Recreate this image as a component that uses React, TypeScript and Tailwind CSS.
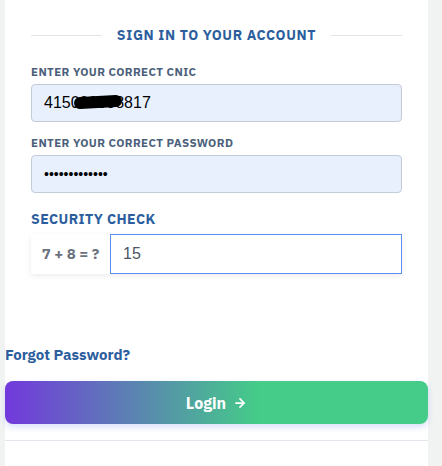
import { ArrowRight } from "lucide-react";

const font = { fontFamily: "'IBM Plex Sans', Inter, 'Liberation Sans', sans-serif" };
const inputFont = { fontFamily: "'Liberation Sans', Arial, sans-serif" };

function Field({ label, children }: { label: string; children: React.ReactNode }) {
  return (
    <div className="flex flex-col">
      <label className="text-[11.5px] font-bold tracking-[0.035em] text-[#4b5f7c] leading-[14px] mb-[5px]">
        {label}
      </label>
      {children}
    </div>
  );
}

export default function App() {
  return (
    <div className="w-[442px] h-[466px] bg-[#f1f3f3] overflow-hidden" style={font}>
      <div className="ml-[5px] w-[423px] h-full bg-white flex flex-col">
        {/* Form area */}
        <div className="px-[26px] pt-[27px]">
          {/* Divider heading */}
          <div className="flex items-center gap-[15px]">
            <div className="flex-1 h-px bg-[#e2e4e6]"></div>
            <h2 className="text-[14px] font-bold tracking-[0.045em] text-[#2c5e9e] leading-[16px]">
              SIGN IN TO YOUR ACCOUNT
            </h2>
            <div className="flex-1 h-px bg-[#e2e4e6]"></div>
          </div>

          <div className="mt-[22px] flex flex-col gap-[14px]">
            <Field label="ENTER YOUR CORRECT CNIC">
              <div className="relative h-[38px] bg-[#e8f0fe] border border-[#c3cbd6] rounded-[4px] flex items-center px-[12px] text-[16px] text-black" style={inputFont}>
                415000008817
                <span className="absolute left-[42px] top-[11px] w-[48px] h-[12px] bg-black rounded-full -rotate-3"></span>
              </div>
            </Field>

            <Field label="ENTER YOUR CORRECT PASSWORD">
              <div className="h-[38px] bg-[#e8f0fe] border border-[#c3cbd6] rounded-[4px] flex items-center px-[12px] text-[14px] text-black" style={inputFont}>
                •••••••••••••
              </div>
            </Field>
          </div>

          {/* Security check */}
          <div className="mt-[18px]">
            <h3 className="text-[14px] font-bold text-[#2c5e9e] leading-[16px] tracking-[0.03em]">SECURITY CHECK</h3>
            <div className="mt-[7px] flex h-[40px] bg-white shadow-[0_2px_6px_rgba(0,0,0,0.08)]">
              <div className="w-[79px] flex items-center justify-center text-[15px] font-bold text-[#6b7280]">
                7 + 8 = ?
              </div>
              <div className="flex-1 border border-[#5a8ef0] flex items-center px-[12px] text-[16px] text-[#4b5563]" style={inputFont}>
                15
              </div>
            </div>
          </div>
        </div>

        {/* Forgot + login */}
        <div className="mt-[72px]">
          <a className="block text-[15px] font-bold text-[#2c5e9e] leading-[18px]">Forgot Password?</a>
          <button className="mt-[17px] w-full h-[43px] rounded-[8px] bg-[linear-gradient(90deg,#7238dc_0%,#44cc88_60%)] shadow-[0_3px_6px_rgba(99,130,240,0.25)] flex items-center justify-center gap-[7px] text-white text-[16px] font-bold">
            Login
            <ArrowRight size={14} strokeWidth={3} />
          </button>
          <div className="mt-[16px] h-px bg-[#e2e6ec]"></div>
        </div>
      </div>
    </div>
  );
}
